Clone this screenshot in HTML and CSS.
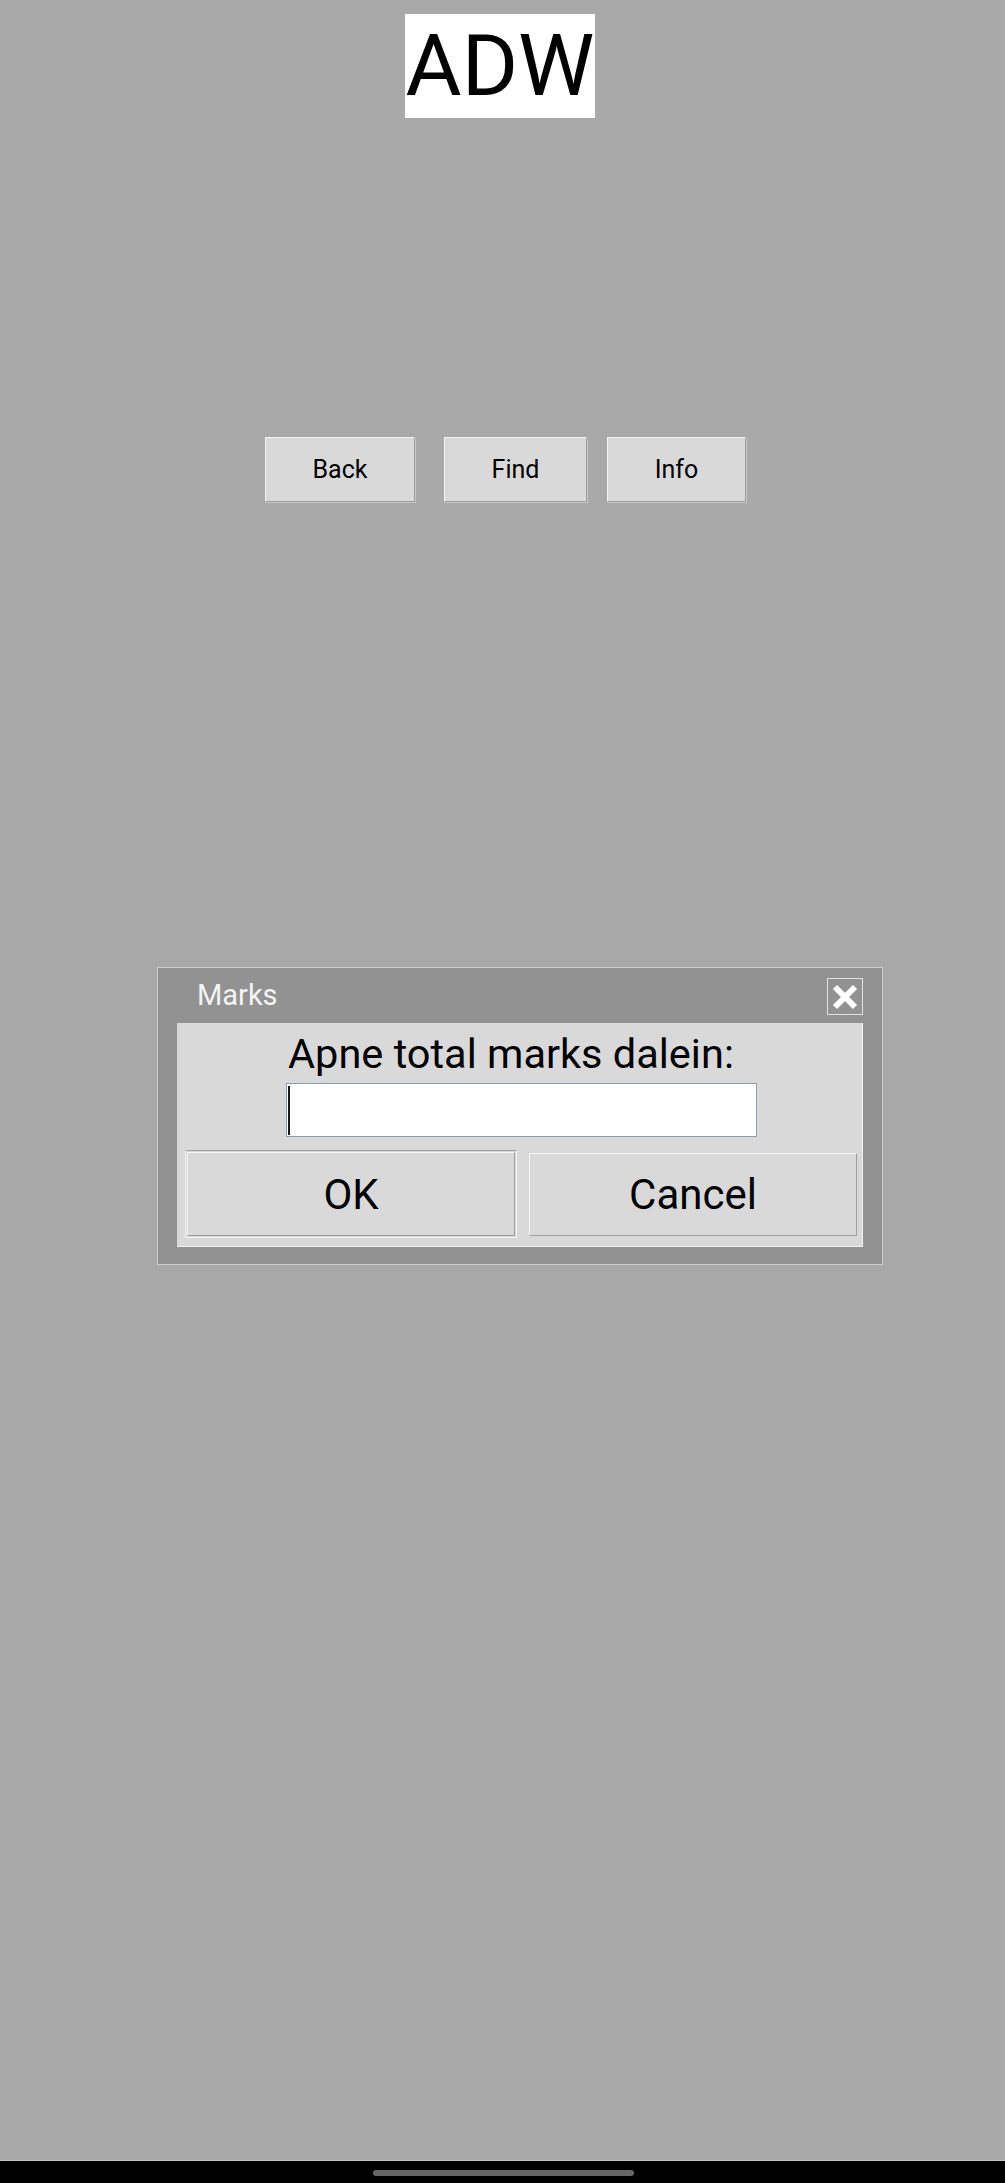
FILE: index.html
```html
<!DOCTYPE html>
<html lang="en">
<head>
<meta charset="utf-8">
<title>ADW</title>
<link rel="stylesheet" href="styles.css">
</head>
<body>
<div class="page">
  <header class="logo">ADW</header>
  <nav class="toolbar">
    <button class="tbtn tbtn-back">Back</button>
    <button class="tbtn tbtn-find">Find</button>
    <button class="tbtn tbtn-info">Info</button>
  </nav>
  <section class="dialog">
    <div class="titlebar">
      <span class="title">Marks</span>
      <button class="close" aria-label="Close">
        <svg width="26" height="26" viewBox="0 0 26 26"><path d="M3 3L23 23M23 3L3 23" stroke="#ffffff" stroke-width="6" stroke-linecap="butt" fill="none"/></svg>
      </button>
    </div>
    <div class="panel">
      <div class="prompt">Apne total marks dalein:</div>
      <div class="field"><span class="caret"></span></div>
      <div class="actions">
        <div class="ok-ring"><button class="dbtn dbtn-ok">OK</button></div>
        <button class="dbtn dbtn-cancel">Cancel</button>
      </div>
    </div>
  </section>
  <footer class="navbar"><span class="pill"></span></footer>
</div>
</body>
</html>
```
FILE: styles.css
```css
html, body {
  margin: 0;
  padding: 0;
  background: #a9a9a9;
}
body {
  font-family: Roboto, "Liberation Sans", sans-serif;
}
.page {
  height: 2183px;
  display: flex;
  flex-direction: column;
}
.logo {
  align-self: flex-start;
  margin: 14px 0 0 405px;
  width: 190px;
  height: 104px;
  background: #ffffff;
  color: #000;
  font-size: 86px;
  line-height: 104px;
  text-align: center;
}
.toolbar {
  display: flex;
  margin-top: 319px;
  padding-left: 265px;
}
.tbtn {
  box-sizing: border-box;
  height: 65px;
  padding: 0;
  background: #d9d9d9;
  border: 1px solid;
  border-color: #f4f4f4 #9c9c9c #9c9c9c #f4f4f4;
  box-shadow: 1px 1px 0 #c8c8c8;
  font-family: Roboto, "Liberation Sans", sans-serif;
  font-size: 25px;
  color: #000;
}
.tbtn-back { width: 150px; }
.tbtn-find { width: 143px; margin-left: 29px; }
.tbtn-info { width: 139px; margin-left: 20px; }

.dialog {
  box-sizing: border-box;
  align-self: flex-start;
  margin: 465px 0 0 157px;
  width: 726px;
  background: #929292;
  border: 1px solid #cfcfcf;
  padding: 0 19px 17px 19px;
}
.titlebar {
  height: 55px;
  display: flex;
  align-items: center;
  justify-content: space-between;
  padding-left: 20px;
}
.title {
  color: #f4f4f4;
  font-size: 29px;
  margin-top: -2px;
}
.close {
  box-sizing: border-box;
  width: 36px;
  height: 37px;
  margin-top: 2px;
  padding: 0;
  background: #929292;
  border: 1px solid #e2e2e2;
  display: flex;
  align-items: center;
  justify-content: center;
}
.close svg { display: block; }
.panel {
  box-sizing: border-box;
  background: #d9d9d9;
  border-right: 1px solid #f2f2f2;
  border-bottom: 1px solid #f2f2f2;
  padding: 7px 5px 8px 8px;
  display: flex;
  flex-direction: column;
}
.prompt {
  font-size: 41.5px;
  line-height: 48px;
  color: #000;
  text-align: center;
  padding-right: 20px;
}
.field {
  box-sizing: border-box;
  align-self: center;
  margin: 5px 0 0 0;
  width: 471px;
  height: 54px;
  background: #ffffff;
  border: 1px solid #8c9db3;
  padding: 2px 0 0 1px;
  display: flex;
}
.caret {
  width: 2px;
  height: 49px;
  background: #1a1a1a;
}
.actions {
  display: flex;
  justify-content: space-between;
  margin-top: 13px;
}
.ok-ring {
  box-sizing: border-box;
  width: 332px;
  height: 88px;
  border: 1px solid;
  border-color: #a0a0a0 #f4f4f4 #f4f4f4 #f0f0f0;
  padding: 1px;
  display: flex;
}
.dbtn {
  box-sizing: border-box;
  padding: 0;
  background: #d9d9d9;
  border: 1px solid;
  border-color: #f6f6f6 #9e9e9e #9e9e9e #f6f6f6;
  font-family: Roboto, "Liberation Sans", sans-serif;
  font-size: 42px;
  color: #000;
}
.dbtn-ok {
  width: 100%;
  height: 100%;
}
.dbtn-cancel {
  width: 328px;
  height: 83px;
  margin-top: 3px;
}
.navbar {
  margin-top: auto;
  height: 22px;
  background: #000;
  border-top: 1px solid #c4c4c4;
  display: flex;
  justify-content: center;
  align-items: flex-start;
}
.pill {
  margin-top: 9px;
  margin-left: 1px;
  width: 261px;
  height: 6px;
  border-radius: 3px;
  background: #666666;
}
```
